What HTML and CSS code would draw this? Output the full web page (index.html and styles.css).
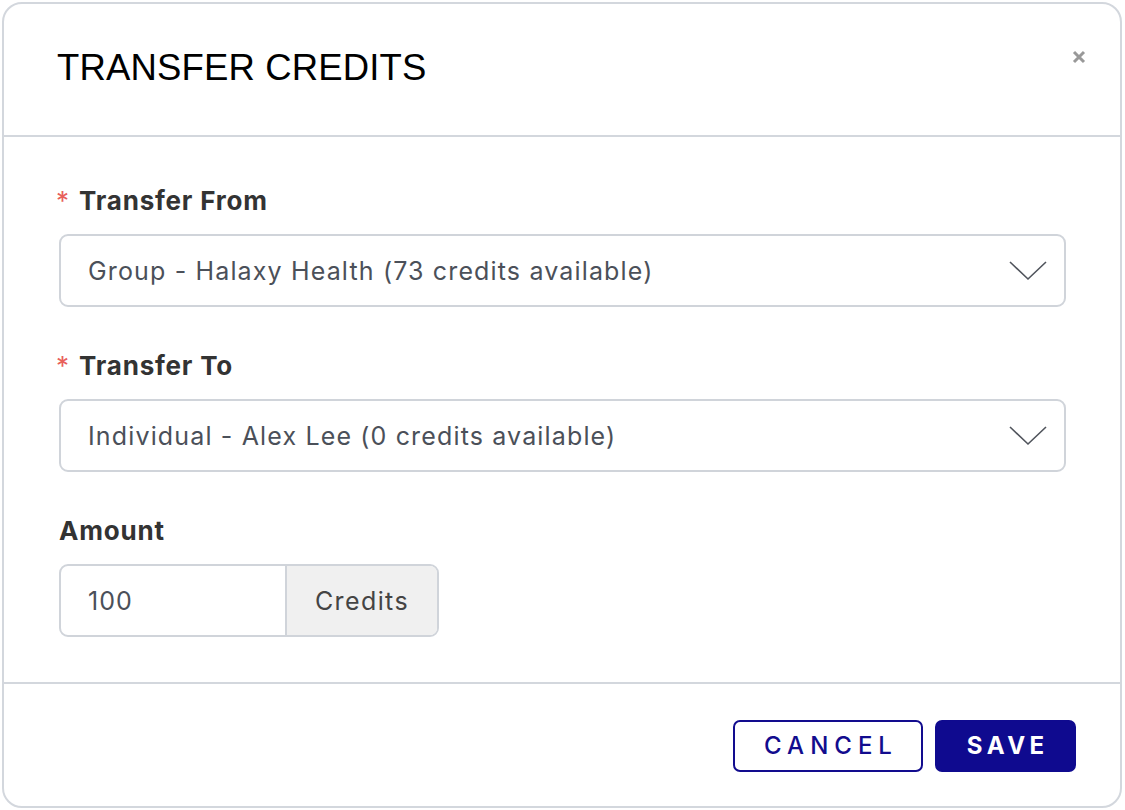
FILE: index.html
```html
<!DOCTYPE html>
<html lang="en">
<head>
<meta charset="utf-8">
<title>Transfer Credits</title>
<link rel="stylesheet" href="styles.css">
</head>
<body>
<div class="modal">
  <div class="modal-header">
    <h1 class="modal-title">TRANSFER CREDITS</h1>
    <button class="close" type="button" aria-label="Close">
      <svg width="14" height="14" viewBox="0 0 14 14"><path d="M2 2 L12 12 M12 2 L2 12" stroke="#999" stroke-width="3" stroke-linecap="butt"/></svg>
    </button>
  </div>
  <div class="modal-body">
    <div class="field">
      <label class="label"><span class="req">*</span>Transfer From</label>
      <div class="select">
        <span class="select-text">Group - Halaxy Health (73 credits available)</span>
        <svg class="chevron" width="38" height="22" viewBox="0 0 38 22"><path d="M1 2 L19 19 L37 2" fill="none" stroke="#50545c" stroke-width="1.6"/></svg>
      </div>
    </div>
    <div class="field">
      <label class="label"><span class="req">*</span>Transfer To</label>
      <div class="select">
        <span class="select-text">Individual - Alex Lee (0 credits available)</span>
        <svg class="chevron" width="38" height="22" viewBox="0 0 38 22"><path d="M1 2 L19 19 L37 2" fill="none" stroke="#50545c" stroke-width="1.6"/></svg>
      </div>
    </div>
    <div class="field">
      <label class="label">Amount</label>
      <div class="input-group">
        <span class="input-value">100</span>
        <span class="addon">Credits</span>
      </div>
    </div>
  </div>
  <div class="modal-footer">
    <button class="btn btn-outline" type="button">CANCEL</button>
    <button class="btn btn-primary" type="button">SAVE</button>
  </div>
</div>
</body>
</html>
```

FILE: styles.css
```css
* { box-sizing: border-box; }
html, body { margin: 0; padding: 0; background: #fff; }
body { font-family: Inter, "Liberation Sans", sans-serif; }

.modal {
  margin: 2px 3px 2px 2px;
  width: 1120px;
  height: 806px;
  border: 2px solid #d3d7dd;
  border-radius: 20px;
  display: flex;
  flex-direction: column;
  background: #fff;
}

.modal-header {
  height: 133px;
  border-bottom: 2px solid #d3d7dd;
  display: flex;
  align-items: flex-start;
  justify-content: space-between;
  padding: 0 34px 0 53px;
}
.modal-title {
  margin: 0;
  padding-top: 42px;
  font-family: "Liberation Sans", Arial, sans-serif;
  font-weight: 400;
  font-size: 36.5px;
  line-height: 44px;
  color: #000;
  letter-spacing: 0.15px;
}
.close {
  margin-top: 46px;
  padding: 0;
  border: 0;
  background: none;
  width: 14px;
  height: 14px;
  display: flex;
}

.modal-body {
  flex: 1;
  padding: 49px 54px 0 55px;
  display: flex;
  flex-direction: column;
}
.field { display: flex; flex-direction: column; }
.field + .field { margin-top: 44px; }
.label {
  display: block;
  font-size: 26px;
  line-height: 30px;
  font-weight: 700;
  color: #333;
  letter-spacing: 0.8px;
  margin-bottom: 18px;
}
.req {
  color: #e8605a;
  font-weight: 400;
  letter-spacing: 0;
  margin: 0 10px 0 -3px;
}

.select {
  height: 73px;
  border: 2px solid #d0d4da;
  border-radius: 9px;
  display: flex;
  align-items: center;
  justify-content: space-between;
  padding: 0 17px 0 27px;
}
.select-text {
  font-size: 25px;
  color: #4b5059;
  letter-spacing: 1.15px;
}
.chevron { display: block; }

.input-group {
  width: 380px;
  height: 73px;
  border: 2px solid #d0d4da;
  border-radius: 9px;
  display: flex;
  overflow: hidden;
}
.input-value {
  flex: 0 0 226px;
  display: flex;
  align-items: center;
  padding-left: 27px;
  font-size: 25px;
  color: #4b5059;
  letter-spacing: 1px;
  border-right: 2px solid #d0d4da;
}
.addon {
  flex: 1;
  display: flex;
  align-items: center;
  justify-content: center;
  background: #f0f0f0;
  font-size: 25px;
  letter-spacing: 1.4px;
  color: #444;
}

.modal-footer {
  height: 124px;
  border-top: 2px solid #d3d7dd;
  display: flex;
  justify-content: flex-end;
  align-items: flex-start;
  gap: 12px;
  padding: 36px 44px 0 0;
}
.btn {
  height: 52px;
  border-radius: 7px;
  font-family: Inter, "Liberation Sans", sans-serif;
  font-size: 24px;
  display: flex;
  align-items: center;
  justify-content: center;
}
.btn-outline {
  width: 190px;
  background: #fff;
  border: 2px solid #120c8e;
  color: #120c8e;
  font-weight: 500;
  letter-spacing: 6px;
  padding: 0 0 2px 6px;
}
.btn-primary {
  width: 141px;
  background: #0f0a8f;
  border: 2px solid #0f0a8f;
  color: #fff;
  font-weight: 700;
  letter-spacing: 4.5px;
  padding: 0 0 2px 4.5px;
}
```
